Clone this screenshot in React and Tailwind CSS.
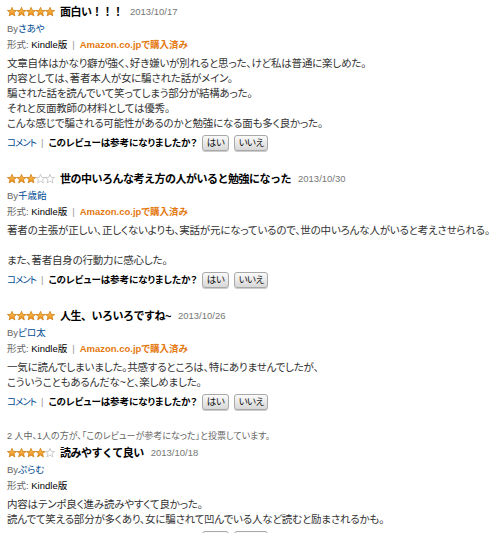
const reviews = [
  {
    stars: 5,
    title: "面白い！！！",
    date: "2013/10/17",
    author: "さあや",
    purchased: true,
    body: [
      "文章自体はかなり癖が強く、好き嫌いが別れると思った、けど私は普通に楽しめた。",
      "内容としては、著者本人が女に騙された話がメイン。",
      "騙された話を読んでいて笑ってしまう部分が結構あった。",
      "それと反面教師の材料としては優秀。",
      "こんな感じで騙される可能性があるのかと勉強になる面も多く良かった。",
    ],
  },
  {
    stars: 3,
    title: "世の中いろんな考え方の人がいると勉強になった",
    date: "2013/10/30",
    author: "千歳飴",
    purchased: true,
    body: [
      "著者の主張が正しい、正しくないよりも、実話が元になっているので、世の中いろんな人がいると考えさせられる。",
      "",
      "また、著者自身の行動力に感心した。",
    ],
  },
  {
    stars: 5,
    title: "人生、いろいろですね~",
    date: "2013/10/26",
    author: "ピロ太",
    purchased: true,
    body: [
      "一気に読んでしまいました。共感するところは、特にありませんでしたが、",
      "こういうこともあるんだな~と、楽しめました。",
    ],
  },
  {
    stars: 4,
    helpful: "2 人中、1人の方が、「このレビューが参考になった」と投票しています。",
    title: "読みやすくて良い",
    date: "2013/10/18",
    author: "ぷらむ",
    purchased: false,
    body: [
      "内容はテンポ良く進み読みやすくて良かった。",
      "読んでて笑える部分が多くあり、女に騙されて凹んでいる人など読むと励まされるかも。",
    ],
  },
];

const STAR = "5,0.3 6.25,3.35 9.6,3.5 7,5.6 7.9,8.9 5,7.1 2.1,8.9 3,5.6 0.4,3.5 3.75,3.35";

function Stars({ count }) {
  return (
    <svg width="48" height="10" viewBox="0 0 48 10" className="shrink-0">
      <defs>
        <linearGradient id="sg" x1="0" y1="0" x2="0" y2="1">
          <stop offset="0" stopColor="#ffc861" />
          <stop offset="1" stopColor="#e88a10" />
        </linearGradient>
      </defs>
      {[0, 1, 2, 3, 4].map((i) => (
        <polygon
          key={i}
          points={STAR}
          transform={`translate(${i * 9.5} 0)`}
          fill={i < count ? "url(#sg)" : "#ffffff"}
          stroke={i < count ? "#c8750a" : "#b8b8b8"}
          strokeWidth="0.7"
        />
      ))}
    </svg>
  );
}

function Btn({ w, children }) {
  return (
    <span
      className={`inline-flex h-[16px] items-center justify-center rounded-[3px] border border-[#a8a8a8] bg-gradient-to-b from-[#fafafa] to-[#d8d8d8] text-[9.5px] tracking-[-0.5px] text-[#111] shadow-[0_1px_0_#ccc] ${w}`}
    >
      {children}
    </span>
  );
}

function Review({ r }) {
  return (
    <div className="mb-[18px]">
      {r.helpful && (
        <div className="text-[9px] leading-[15px] text-[#666] [font-feature-settings:'palt']">
          {r.helpful}
        </div>
      )}
      <div className="flex h-[18px] items-center">
        <Stars count={r.stars} />
        <span className="ml-[5px] text-[11px] font-bold tracking-[-0.5px] text-black">
          {r.title}
        </span>
        <span className="ml-[7px] text-[9.5px] text-[#777]">{r.date}</span>
      </div>
      <div className="text-[9.5px] leading-[16px] text-[#666] [font-feature-settings:'palt']">
        By<span className="text-[#004b91]">{r.author}</span>
      </div>
      <div className="text-[9.5px] leading-[16px] text-[#666] [font-feature-settings:'palt']">
        形式: <span className="text-black">Kindle版</span>
        {r.purchased && (
          <>
            <span className="mx-[5px] text-[#999]">|</span>
            <span className="font-bold text-[#e47911]">Amazon.co.jpで購入済み</span>
          </>
        )}
      </div>
      <div className="mt-[3px] text-[10.5px] leading-[15px] tracking-[-0.2px] text-[#333] [font-feature-settings:'palt']">
        {r.body.map((line, i) => (
          <div key={i} className="h-[15px] whitespace-nowrap">
            {line}
          </div>
        ))}
      </div>
      <div className="mt-[3px] flex h-[18px] items-center text-[9.5px] [font-feature-settings:'palt']">
        <span className="tracking-[-1px] text-[#004b91]">コメント</span>
        <span className="mx-[5px] text-[#999]">|</span>
        <span className="font-bold text-black">このレビューは参考になりましたか？</span>
        <span className="ml-[5px] flex gap-[5px]">
          <Btn w="w-[27px]">はい</Btn>
          <Btn w="w-[34px]">いいえ</Btn>
        </span>
      </div>
    </div>
  );
}

export default function App() {
  return (
    <div
      className="h-[533px] overflow-hidden bg-white px-[7px] pt-[3px]"
      style={{ fontFamily: '"Liberation Sans", "Noto Sans CJK JP", sans-serif' }}
    >
      {reviews.map((r, i) => (
        <Review key={i} r={r} />
      ))}
    </div>
  );
}
